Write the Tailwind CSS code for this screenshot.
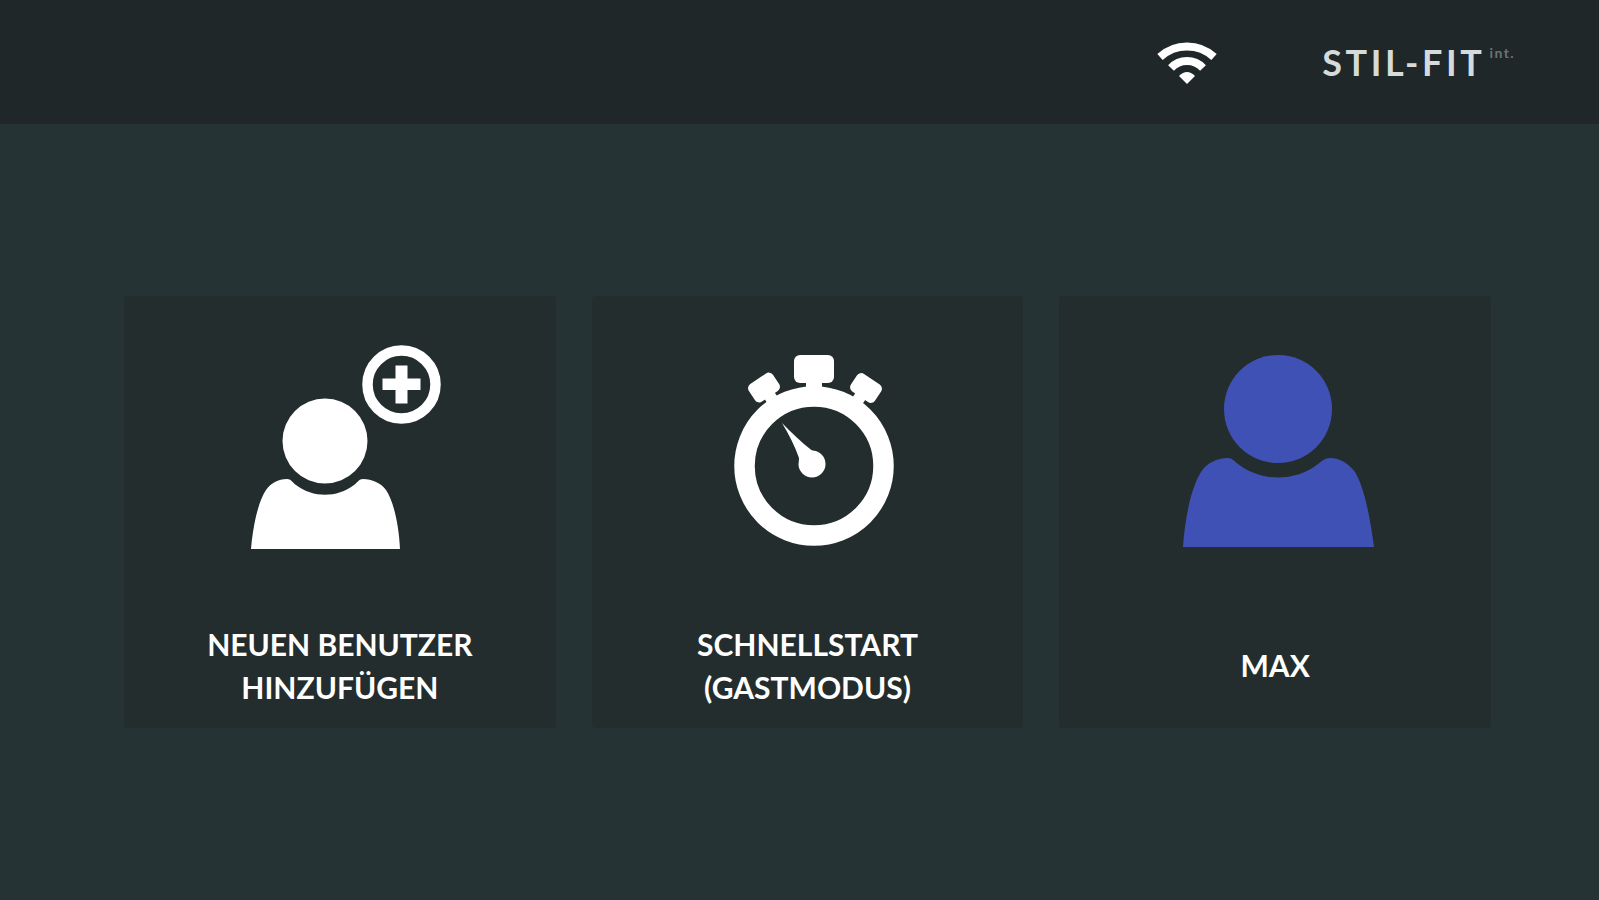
<!DOCTYPE html>
<html lang="de">
<head>
    <meta charset="UTF-8">
    <meta name="viewport" content="width=device-width, initial-scale=1.0">
    <title>STIL-FIT</title>
    <!-- Tailwind CSS CDN for easy styling -->
    <script src="https://cdn.jsdelivr.net/npm/@tailwindcss/browser@4"></script>
</head>
<body class="min-h-screen bg-[#263334] font-['Lato',sans-serif] text-white">

    <!-- Top bar -->
    <header class="flex h-31 items-center justify-end gap-26 bg-[#1f2729] pr-21">
        <svg class="h-[46px] w-[62px]" viewBox="0 0 62 46" fill="none" stroke="currentColor" stroke-width="8" role="img" aria-label="WLAN">
            <path d="M4 18A40 40 0 0 1 58 18" />
            <path d="M15 29A22 22 0 0 1 47 29" />
            <path d="M23 37Q31 29 39 37L31 45Z" fill="currentColor" stroke="none" />
        </svg>
        <div class="flex items-start text-[#d5dada]">
            <span class="text-4xl font-bold tracking-widest">STIL-FIT</span>
            <sup class="top-0 ml-1 pt-1 text-sm leading-none font-bold tracking-widest text-[#6c7476]">int.</sup>
        </div>
    </header>

    <!-- User selection -->
    <main class="grid grid-cols-3 gap-9 pt-43 pr-27 pl-31">

        <button type="button" class="flex aspect-square flex-col items-center rounded-sm bg-[#232d2d] pt-11">
            <svg class="size-55 shrink-0" viewBox="0 0 220 220" fill="currentColor" aria-hidden="true">
                <circle cx="95" cy="101" r="42.5" />
                <path d="M21 209C23 184 29 160 36 150C41 143 48 139 57 139C61 139 62 142 66 145C83 158 107 158 124 145C128 142 129 139 133 139C142 139 151 143 156 150C163 160 169 184 170 209Z" />
                <circle cx="171.5" cy="44.5" r="34" fill="none" stroke="currentColor" stroke-width="10.5" />
                <path d="M165.5 25.500H177.500V38.500H190.500V50H177.500V63.500H165.500V50H152.500V38.500H165.500Z" />
            </svg>
            <span class="flex flex-1 items-center pt-11 text-3xl leading-[43px] font-bold">NEUEN BENUTZER<br>HINZUFÜGEN</span>
        </button>

        <button type="button" class="flex aspect-square flex-col items-center rounded-sm bg-[#232d2d] pt-11">
            <svg class="size-55 shrink-0" viewBox="0 0 220 220" fill="currentColor" aria-hidden="true">
                <circle cx="117" cy="126" r="69.5" fill="none" stroke="currentColor" stroke-width="20.5" />
                <rect x="97" y="15" width="40" height="28" rx="6" />
                <rect x="109" y="40" width="16" height="12" />
                <g transform="rotate(-34 67 47.5)">
                    <rect x="52.5" y="37" width="29" height="21" rx="5" />
                    <rect x="61" y="55" width="12" height="12" />
                </g>
                <g transform="rotate(34 169 48)">
                    <rect x="154.5" y="37.5" width="29" height="21" rx="5" />
                    <rect x="163" y="55" width="12" height="12" />
                </g>
                <circle cx="115" cy="124" r="13.5" />
                <path d="M85 83C94 92 104 102 115 110.5Q121 112 120 117L106 128Q101 125 102 118C98 106 92 95 85 83Z" />
            </svg>
            <span class="flex flex-1 items-center pt-11 text-3xl leading-[43px] font-bold">SCHNELLSTART<br>(GASTMODUS)</span>
        </button>

        <button type="button" class="flex aspect-square flex-col items-center rounded-sm bg-[#232d2d] pt-11">
            <svg class="size-55 shrink-0 text-[#4051b5]" viewBox="0 0 220 220" fill="currentColor" aria-hidden="true">
                <circle cx="113" cy="69" r="54" />
                <path d="M18 207C20 178 26 148 36 132C42 123 52 118 63 118C67 118 69 121 73 124C96 142 130 142 153 124C157 121 160 118 165 118C175 118 184 124 190 132C200 149 205 178 209 207Z" />
            </svg>
            <span class="flex flex-1 items-center pt-11 text-3xl leading-[43px] font-bold">MAX</span>
        </button>

    </main>

</body>
</html>
